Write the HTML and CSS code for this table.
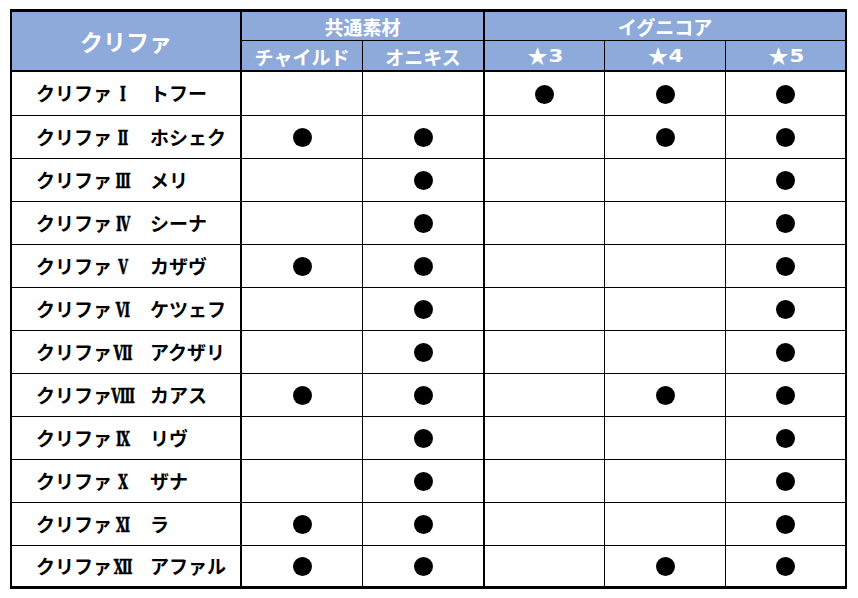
FILE: index.html
```html
<!DOCTYPE html>
<html lang="ja">
<head>
<meta charset="utf-8">
<title>クリファ</title>
<link rel="stylesheet" href="styles.css">
</head>
<body>
<div class="sheet">
  <div class="hd hd-name">クリファ</div>
  <div class="hd hd-group hd-common">共通素材</div>
  <div class="hd hd-group hd-core">イグニコア</div>
  <div class="hd hd-sub c2">チャイルド</div>
  <div class="hd hd-sub c3">オニキス</div>
  <div class="hd hd-sub c4"><span class="star">★</span><span class="num">3</span></div>
  <div class="hd hd-sub c5"><span class="star">★</span><span class="num">4</span></div>
  <div class="hd hd-sub c6"><span class="star">★</span><span class="num">5</span></div>

  <div class="row">
    <div class="cell c1 name"><span class="label">クリファ<span class="roman">Ⅰ</span>　トフー</span></div>
    <div class="cell c2"></div>
    <div class="cell c3"></div>
    <div class="cell c4"><span class="dot"></span></div>
    <div class="cell c5"><span class="dot"></span></div>
    <div class="cell c6"><span class="dot"></span></div>
  </div>
  <div class="row">
    <div class="cell c1 name"><span class="label">クリファ<span class="roman">Ⅱ</span>　ホシェク</span></div>
    <div class="cell c2"><span class="dot"></span></div>
    <div class="cell c3"><span class="dot"></span></div>
    <div class="cell c4"></div>
    <div class="cell c5"><span class="dot"></span></div>
    <div class="cell c6"><span class="dot"></span></div>
  </div>
  <div class="row">
    <div class="cell c1 name"><span class="label">クリファ<span class="roman">Ⅲ</span>　メリ</span></div>
    <div class="cell c2"></div>
    <div class="cell c3"><span class="dot"></span></div>
    <div class="cell c4"></div>
    <div class="cell c5"></div>
    <div class="cell c6"><span class="dot"></span></div>
  </div>
  <div class="row">
    <div class="cell c1 name"><span class="label">クリファ<span class="roman">Ⅳ</span>　シーナ</span></div>
    <div class="cell c2"></div>
    <div class="cell c3"><span class="dot"></span></div>
    <div class="cell c4"></div>
    <div class="cell c5"></div>
    <div class="cell c6"><span class="dot"></span></div>
  </div>
  <div class="row">
    <div class="cell c1 name"><span class="label">クリファ<span class="roman">Ⅴ</span>　カザヴ</span></div>
    <div class="cell c2"><span class="dot"></span></div>
    <div class="cell c3"><span class="dot"></span></div>
    <div class="cell c4"></div>
    <div class="cell c5"></div>
    <div class="cell c6"><span class="dot"></span></div>
  </div>
  <div class="row">
    <div class="cell c1 name"><span class="label">クリファ<span class="roman">Ⅵ</span>　ケツェフ</span></div>
    <div class="cell c2"></div>
    <div class="cell c3"><span class="dot"></span></div>
    <div class="cell c4"></div>
    <div class="cell c5"></div>
    <div class="cell c6"><span class="dot"></span></div>
  </div>
  <div class="row">
    <div class="cell c1 name"><span class="label">クリファ<span class="roman">Ⅶ</span>　アクザリ</span></div>
    <div class="cell c2"></div>
    <div class="cell c3"><span class="dot"></span></div>
    <div class="cell c4"></div>
    <div class="cell c5"></div>
    <div class="cell c6"><span class="dot"></span></div>
  </div>
  <div class="row">
    <div class="cell c1 name"><span class="label">クリファ<span class="roman">Ⅷ</span>　カアス</span></div>
    <div class="cell c2"><span class="dot"></span></div>
    <div class="cell c3"><span class="dot"></span></div>
    <div class="cell c4"></div>
    <div class="cell c5"><span class="dot"></span></div>
    <div class="cell c6"><span class="dot"></span></div>
  </div>
  <div class="row">
    <div class="cell c1 name"><span class="label">クリファ<span class="roman">Ⅸ</span>　リヴ</span></div>
    <div class="cell c2"></div>
    <div class="cell c3"><span class="dot"></span></div>
    <div class="cell c4"></div>
    <div class="cell c5"></div>
    <div class="cell c6"><span class="dot"></span></div>
  </div>
  <div class="row">
    <div class="cell c1 name"><span class="label">クリファ<span class="roman">Ⅹ</span>　ザナ</span></div>
    <div class="cell c2"></div>
    <div class="cell c3"><span class="dot"></span></div>
    <div class="cell c4"></div>
    <div class="cell c5"></div>
    <div class="cell c6"><span class="dot"></span></div>
  </div>
  <div class="row">
    <div class="cell c1 name"><span class="label">クリファ<span class="roman">Ⅺ</span>　ラ</span></div>
    <div class="cell c2"><span class="dot"></span></div>
    <div class="cell c3"><span class="dot"></span></div>
    <div class="cell c4"></div>
    <div class="cell c5"></div>
    <div class="cell c6"><span class="dot"></span></div>
  </div>
  <div class="row last">
    <div class="cell c1 name"><span class="label">クリファ<span class="roman">Ⅻ</span>　アファル</span></div>
    <div class="cell c2"><span class="dot"></span></div>
    <div class="cell c3"><span class="dot"></span></div>
    <div class="cell c4"></div>
    <div class="cell c5"><span class="dot"></span></div>
    <div class="cell c6"><span class="dot"></span></div>
  </div>
</div>
</body>
</html>
```

FILE: styles.css
```css
html, body {
  margin: 0;
  padding: 0;
  background: #ffffff;
}

body {
  font-family: "Noto Sans CJK JP", "Noto Sans", sans-serif;
  color: #000000;
}

.sheet {
  margin: 9px 0 0 10px;
  width: 833px;
  display: grid;
  grid-template-columns: 230px 121px 122px 120px 121px 119px;
  grid-template-rows: 29px 31px 44px repeat(10, 43px) 40px;
  border-style: solid;
  border-color: #000000;
  border-width: 3px 2px 3px 2px;
}

.sheet > .hd,
.row > .cell {
  box-sizing: border-box;
  display: flex;
  align-items: center;
  justify-content: center;
  min-width: 0;
}

.sheet > .row {
  display: contents;
}

.hd {
  background: #8eaadb;
  color: #ffffff;
  font-weight: 700;
  line-height: 1;
}

.hd-name {
  grid-row: 1 / span 2;
  grid-column: 1;
  font-size: 23px;
  border-right: 2px solid #000;
  border-bottom: 2px solid #000;
}

.hd-group {
  font-size: 19px;
  border-bottom: 1px solid #000;
  padding-top: 1px;
}

.hd-common {
  grid-column: 2 / span 2;
  border-right: 2px solid #000;
}

.hd-core {
  grid-column: 4 / span 3;
}

.hd-sub {
  font-size: 19px;
  border-bottom: 2px solid #000;
  padding-top: 1px;
}

.star {
  font-size: 20px;
}

.num {
  display: inline-block;
  font-family: "DejaVu Sans", sans-serif;
  font-size: 17px;
  font-weight: 700;
  margin-left: 2px;
  transform: scaleX(1.25);
}

.c1 { border-right: 2px solid #000; }
.c2 { border-right: 1px solid #000; }
.c3 { border-right: 2px solid #000; }
.c4 { border-right: 1px solid #000; }
.c5 { border-right: 1px solid #000; }

.cell {
  border-bottom: 1px solid #000;
  background: #ffffff;
}

.last .cell {
  border-bottom: none;
}

.row > .name {
  justify-content: flex-start;
  padding-left: 24px;
}

.label {
  font-size: 19px;
  font-weight: 700;
  line-height: 1;
  white-space: nowrap;
}

.roman {
  display: inline-block;
  width: 46px;
  margin-left: -12px;
  margin-right: -15px;
  text-align: center;
  font-family: "DejaVu Serif Condensed", "DejaVu Serif", serif;
  font-size: 21px;
  font-weight: 700;
  white-space: nowrap;
  transform: scaleX(0.66);
  -webkit-text-stroke: 0.6px #000;
}

.dot {
  display: block;
  width: 19px;
  height: 19px;
  border-radius: 50%;
  background: #000000;
  margin-top: 1px;
}
```
